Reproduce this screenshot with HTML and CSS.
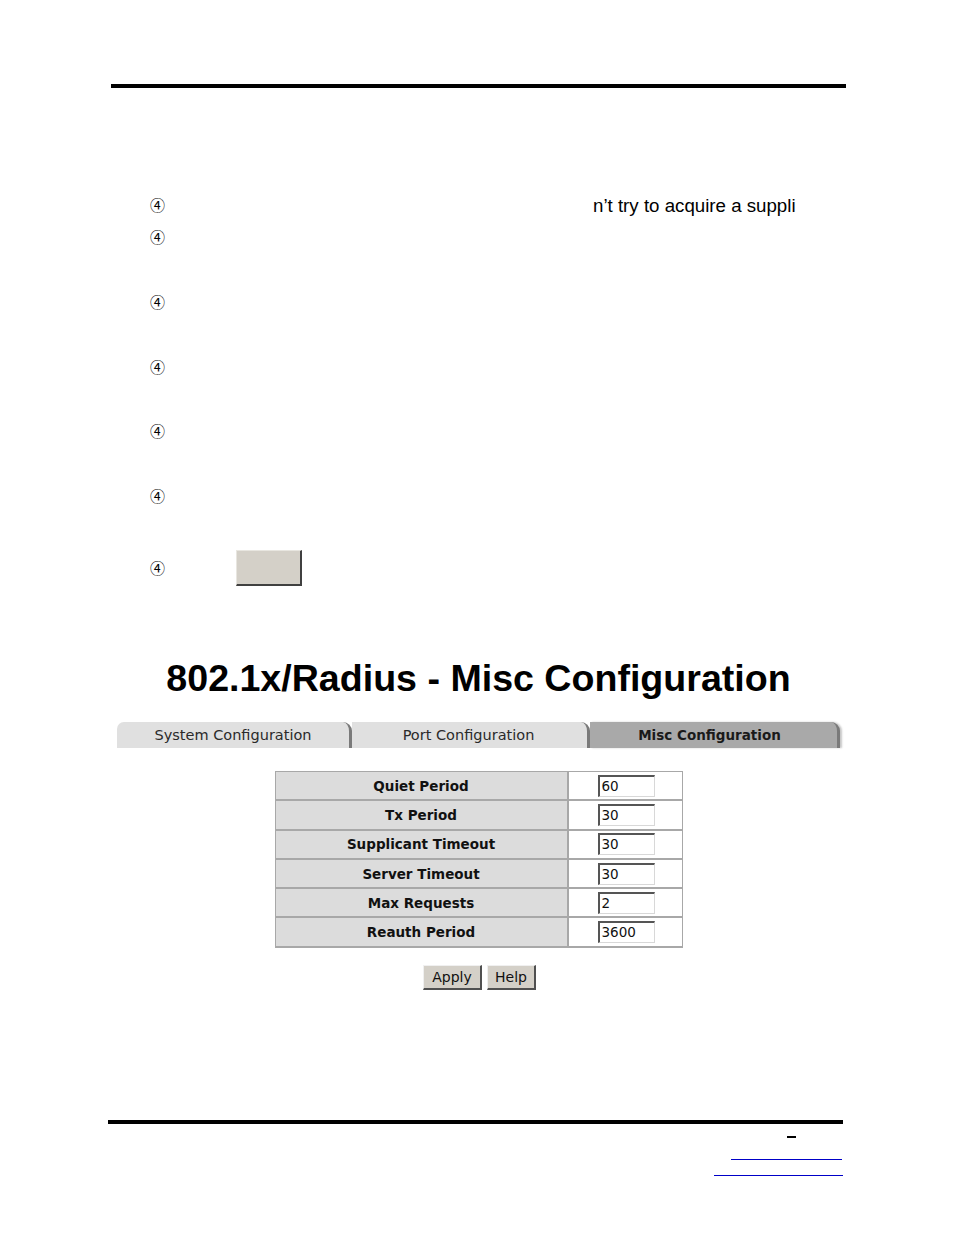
FILE: index.html
```html
<!DOCTYPE html>
<html>
<head>
<meta charset="utf-8">
<link rel="stylesheet" href="styles.css">
</head>
<body>
<div class="page">
  <div class="top-rule"></div>

  <div class="items">
    <div class="item i1"><span class="bullet">④</span><span class="snippet">n’t try to acquire a suppli</span></div>
    <div class="item i2"><span class="bullet">④</span></div>
    <div class="item i3"><span class="bullet">④</span></div>
    <div class="item i4"><span class="bullet">④</span></div>
    <div class="item i5"><span class="bullet">④</span></div>
    <div class="item i6"><span class="bullet">④</span></div>
    <div class="item i7"><span class="bullet">④</span><span class="blank-btn"></span></div>
  </div>

  <div class="shot">
    <h1 class="title">802.1x/Radius - Misc Configuration</h1>
    <div class="tabs">
      <div class="tab t1">System Configuration</div>
      <div class="tab t2">Port Configuration</div>
      <div class="tab t3">Misc Configuration</div>
    </div>
    <table class="cfg">
      <tr><td class="lbl">Quiet Period</td><td class="val"><span class="inp">60</span></td></tr>
      <tr><td class="lbl">Tx Period</td><td class="val"><span class="inp">30</span></td></tr>
      <tr><td class="lbl">Supplicant Timeout</td><td class="val"><span class="inp">30</span></td></tr>
      <tr><td class="lbl">Server Timeout</td><td class="val"><span class="inp">30</span></td></tr>
      <tr><td class="lbl">Max Requests</td><td class="val"><span class="inp">2</span></td></tr>
      <tr><td class="lbl">Reauth Period</td><td class="val"><span class="inp">3600</span></td></tr>
    </table>
    <div class="actions">
      <span class="btn apply">Apply</span>
      <span class="btn help">Help</span>
    </div>
  </div>

  <div class="footer">
    <div class="bottom-rule"></div>
    <div class="foot-marks">
      <div class="dash"></div>
      <div class="blue b1"></div>
      <div class="blue b2"></div>
    </div>
  </div>
</div>
</body>
</html>
```
FILE: styles.css
```css
html, body {
  margin: 0;
  padding: 0;
  background: #ffffff;
}
body {
  font-family: "Liberation Sans", Arial, sans-serif;
  color: #000;
}
.page {
  width: 954px;
  height: 1235px;
  overflow: hidden;
  padding-top: 84px;
  box-sizing: border-box;
}
.top-rule {
  margin-left: 111px;
  width: 735px;
  height: 4px;
  background: #000;
}
.items {
  margin-top: 101px;
}
.item {
  height: 32px;
  display: flex;
  align-items: center;
  padding-left: 150px;
}
.i3, .i4, .i6 { margin-top: 33px; }
.i5 { margin-top: 32px; }
.i7 { margin-top: 38px; height: 35px; }
.bullet {
  font-family: "Noto Sans CJK JP", "DejaVu Sans", sans-serif;
  font-size: 15px;
  width: 16px;
  line-height: 16px;
  color: #000;
}
.snippet {
  margin-left: 427px;
  font-size: 18.7px;
  line-height: 20px;
  margin-top: 2px;
}
.blank-btn {
  margin-left: 70px;
  width: 63px;
  height: 33px;
  background: #d4d0c8;
  border-top: 1px solid #e8e6e0;
  border-left: 1px solid #e8e6e0;
  border-right: 2px solid #404040;
  border-bottom: 2px solid #404040;
  box-sizing: content-box;
}
.shot {
  margin-left: 111px;
  width: 735px;
  margin-top: 71px;
}
.title {
  margin: 0;
  text-align: center;
  font-size: 37.6px;
  line-height: 44px;
  font-weight: bold;
  color: #000;
  font-family: "Liberation Sans", Arial, sans-serif;
}
.tabs {
  display: flex;
  margin-top: 22px;
  margin-left: 6px;
  height: 26px;
}
.tab {
  height: 26px;
  line-height: 27px;
  text-align: center;
  font-family: "DejaVu Sans", Verdana, sans-serif;
  font-size: 14.5px;
  color: #2a2a2a;
  box-sizing: border-box;
  border-top-left-radius: 7px;
  border-top-right-radius: 9px;
}
.t1 {
  width: 235px;
  background: #e0e0e0;
  border-right: 3px solid #7a7a7a;
}
.t2 {
  width: 238px;
  background: #e0e0e0;
  border-right: 3px solid #7a7a7a;
  border-top-left-radius: 0;
  padding-right: 2px;
}
.t3 {
  width: 250px;
  background: #a9a9a9;
  border-right: 3px solid #7a7a7a;
  border-top-left-radius: 0;
  font-weight: bold;
  font-size: 13.5px;
  color: #1a1a1a;
  box-shadow: 2px 0 2px #c8c8c8;
  padding-right: 8px;
}
.cfg {
  margin: 23px auto 0;
  border-collapse: collapse;
  border: 1px solid #a8a8a8;
}
.cfg td {
  border: 2px solid #a8a8a8;
  height: 27.3px;
  padding: 0;
}
.cfg tr:first-child td { border-top-width: 1px; }
.cfg td.lbl {
  width: 291px;
  background: #dcdcdc;
  text-align: center;
  font-family: "DejaVu Sans", Verdana, sans-serif;
  font-weight: bold;
  font-size: 13.5px;
  color: #111;
  border-left-width: 1px;
}
.cfg td.val {
  width: 113px;
  background: #ffffff;
  text-align: center;
  border-right-width: 1px;
}
.inp {
  display: inline-block;
  vertical-align: middle;
  width: 52px;
  height: 19px;
  line-height: 19px;
  text-align: left;
  padding-left: 2px;
  font-family: "DejaVu Sans", Verdana, sans-serif;
  font-size: 13.5px;
  color: #111;
  background: #fff;
  border-top: 2px solid #555;
  border-left: 2px solid #555;
  border-right: 1px solid #d8d8d8;
  border-bottom: 1px solid #d8d8d8;
  margin-left: 2px;
}
.actions {
  margin-top: 17px;
  display: flex;
  justify-content: center;
  gap: 5px;
  margin-left: 2px;
}
.btn {
  display: inline-block;
  height: 22px;
  line-height: 22px;
  background: #d4d0c8;
  font-family: "DejaVu Sans", Verdana, sans-serif;
  font-size: 14px;
  color: #111;
  text-align: center;
  border-top: 1px solid #f0f0f0;
  border-left: 1px solid #f0f0f0;
  border-right: 2px solid #505050;
  border-bottom: 2px solid #505050;
}
.apply { width: 56px; }
.help { width: 46px; }
.footer {
  margin-top: 130px;
}
.bottom-rule {
  margin-left: 108px;
  width: 735px;
  height: 4px;
  background: #000;
}
.foot-marks {
  width: 843px;
  display: flex;
  flex-direction: column;
  align-items: flex-end;
}
.dash {
  margin-top: 12px;
  margin-right: 47px;
  width: 9px;
  height: 2px;
  background: #000;
}
.blue {
  height: 1px;
  background: #0000c8;
}
.b1 { margin-top: 21px; width: 111px; margin-right: 1px; }
.b2 { margin-top: 15px; width: 129px; }
```
